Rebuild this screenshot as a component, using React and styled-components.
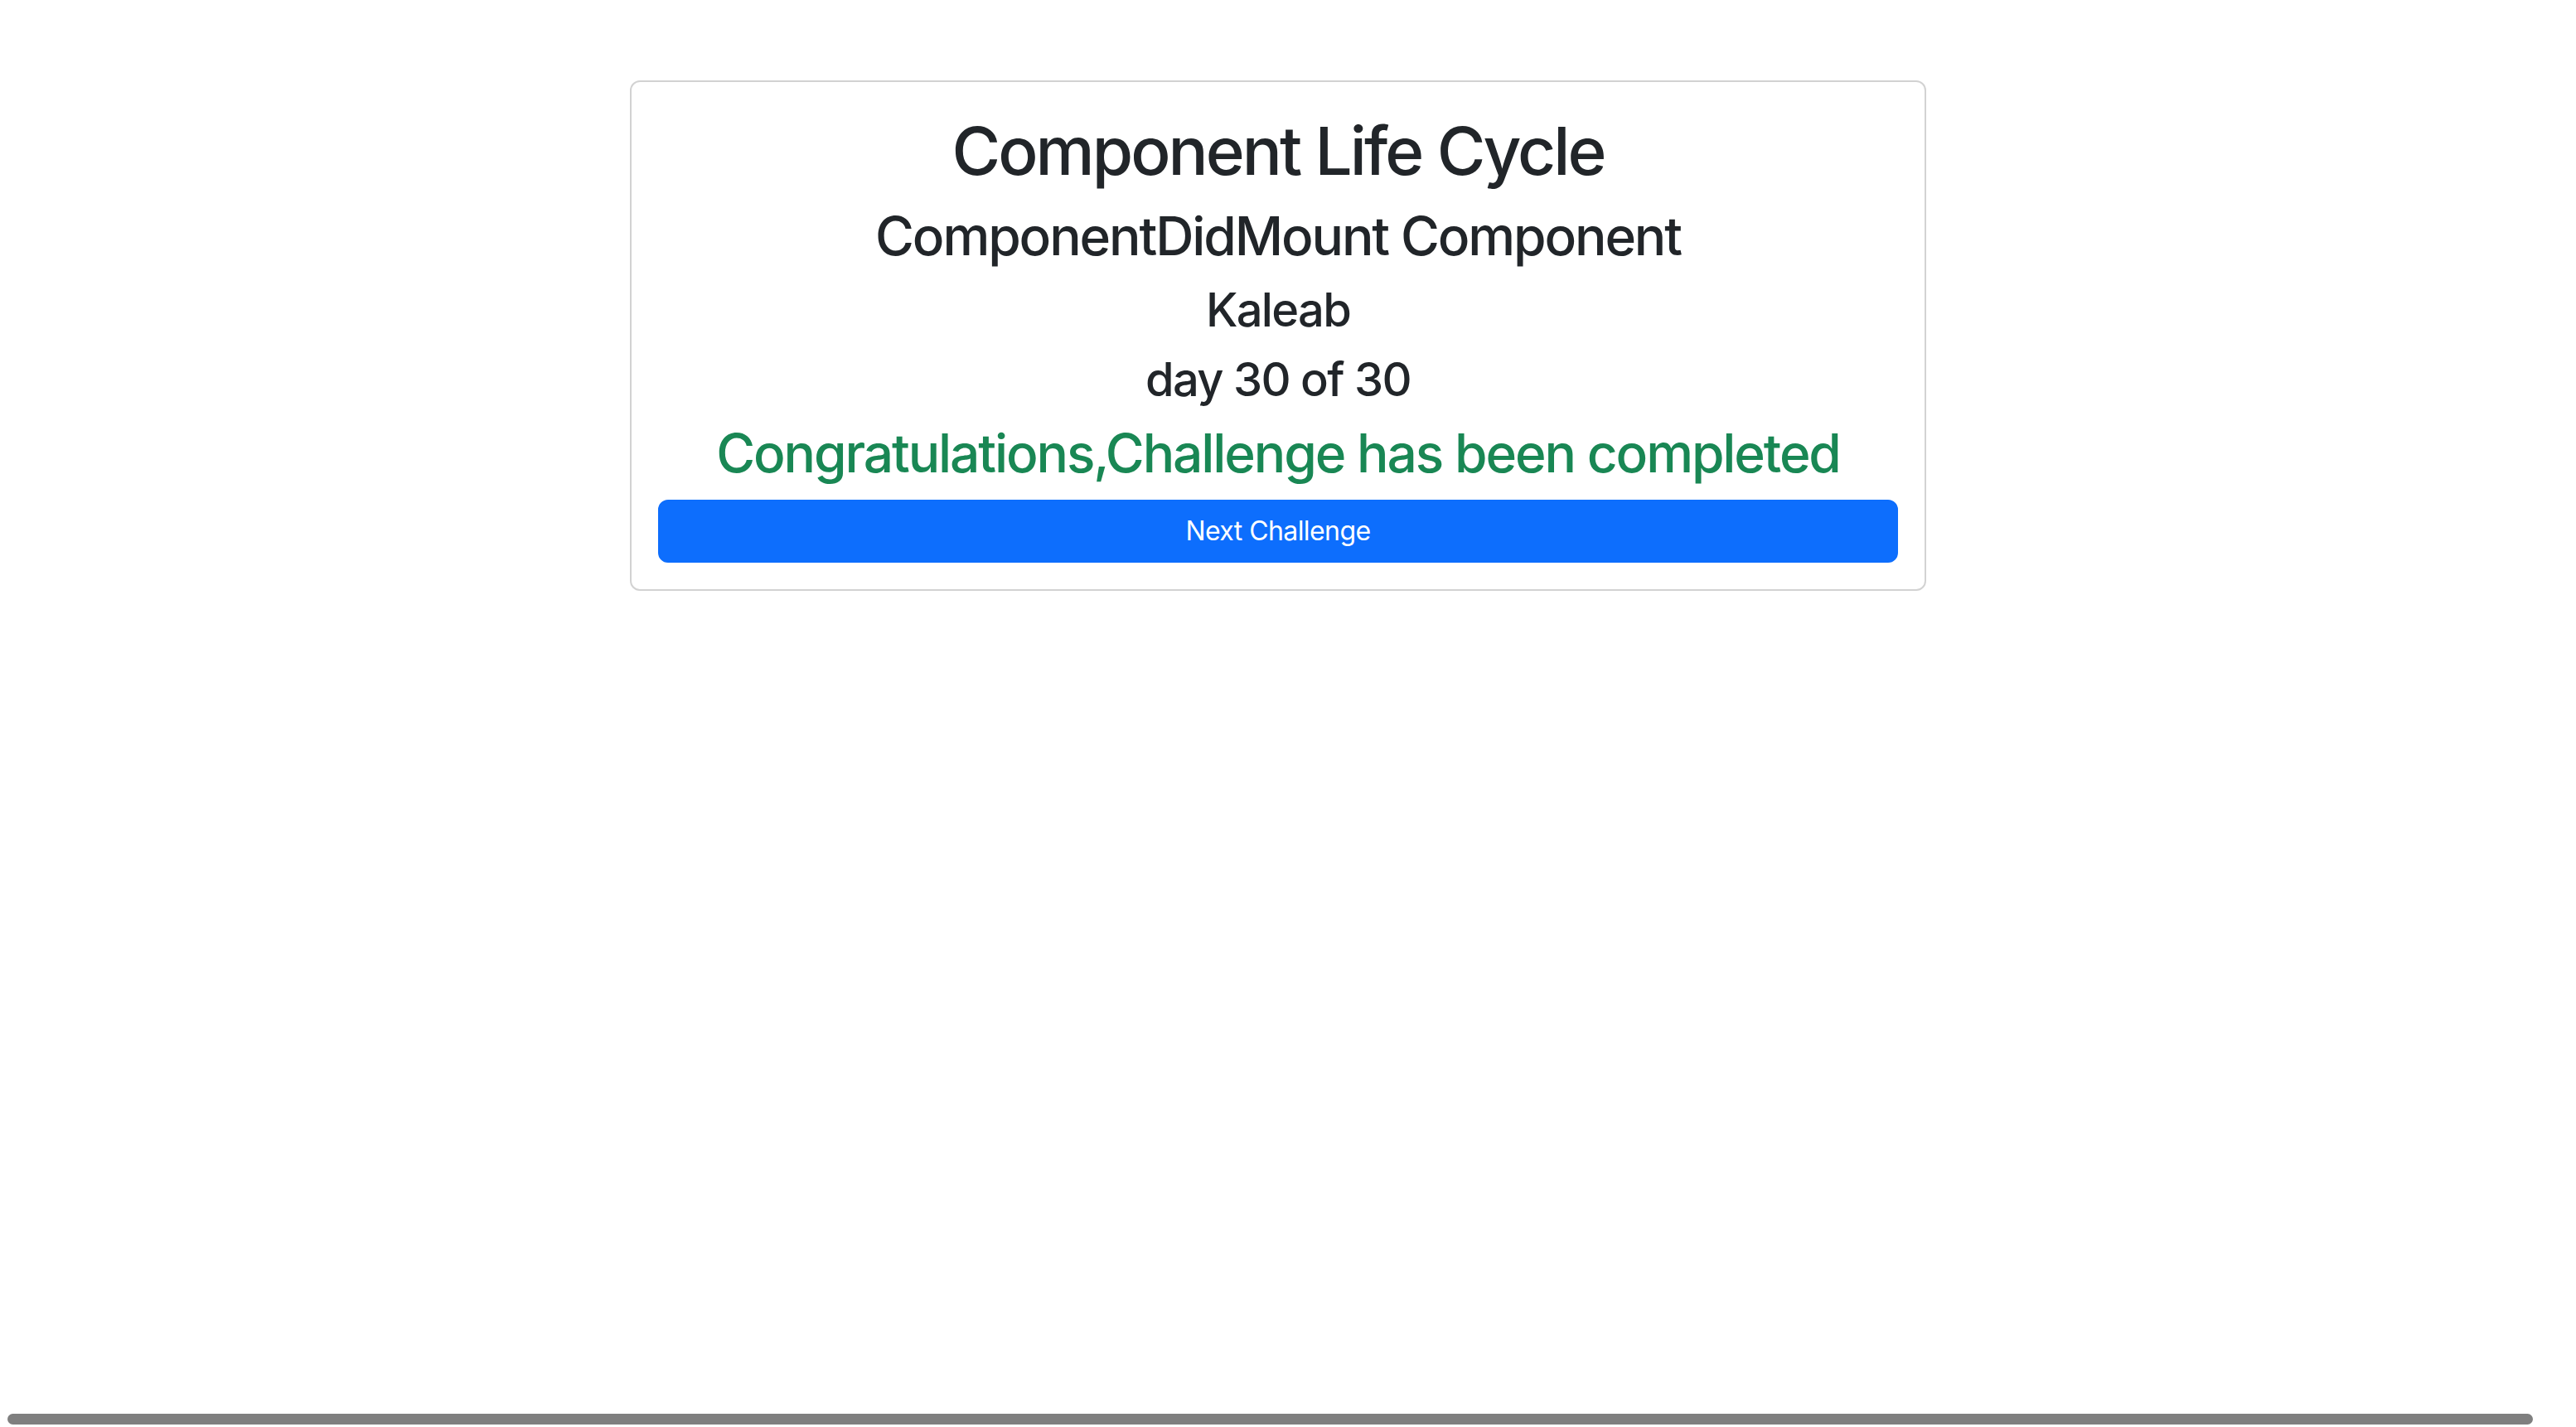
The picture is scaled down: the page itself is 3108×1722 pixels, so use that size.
import React from 'react'
import styled, { createGlobalStyle } from 'styled-components'

const GlobalStyle = createGlobalStyle`
  html, body {
    margin: 0;
    padding: 0;
    background: #fff;
  }

  body {
    font-family: Inter, "Noto Sans", "Liberation Sans", sans-serif;
    color: #212529;
    overflow: hidden;
  }
`

const Page = styled.div`
  min-height: 1722px;
  padding: 97px 0 0 760px;
  box-sizing: border-box;
`

const Card = styled.div`
  width: 1564px;
  box-sizing: border-box;
  border: 2px solid rgba(0, 0, 0, 0.175);
  border-radius: 12px;
  padding: 35px 32px 32px;
  text-align: center;
`

const Heading = styled.div`
  margin: 0 0 17px;
  font-size: ${({ size }) => size}px;
  font-weight: 500;
  line-height: 1.2;
  letter-spacing: ${({ tracking }) => tracking}em;
  color: ${({ success }) => (success ? '#198754' : '#212529')};
`

const Button = styled.button`
  display: block;
  width: 100%;
  margin: 0;
  padding: 12px 24px;
  border: 2px solid #0d6efd;
  border-radius: 12px;
  background: #0d6efd;
  color: #fff;
  font-family: inherit;
  font-size: 32px;
  font-weight: 400;
  line-height: 1.5;
  letter-spacing: -0.018em;
  cursor: pointer;
`

const Scrollbar = styled.div`
  position: fixed;
  left: 9px;
  right: 52px;
  bottom: 3px;
  height: 13px;
  border-radius: 7px;
  background: #7f7f7f;
`

const lines = [
  { text: 'Component Life Cycle', size: 80, tracking: -0.037 },
  { text: 'ComponentDidMount Component', size: 64, tracking: -0.033 },
  { text: 'Kaleab', size: 56, tracking: -0.03 },
  { text: 'day 30 of 30', size: 56, tracking: -0.03 },
  { text: 'Congratulations,Challenge has been completed', size: 64, tracking: -0.033, success: true }
]

function App() {
  return (
    <>
      <GlobalStyle />
      <Page>
        <Card>
          {lines.map(({ text, size, tracking, success }, index) => (
            <Heading key={index} size={size} tracking={tracking} success={success}>
              {text}
            </Heading>
          ))}
          <Button>Next Challenge</Button>
        </Card>
      </Page>
      <Scrollbar />
    </>
  )
}

export default App
